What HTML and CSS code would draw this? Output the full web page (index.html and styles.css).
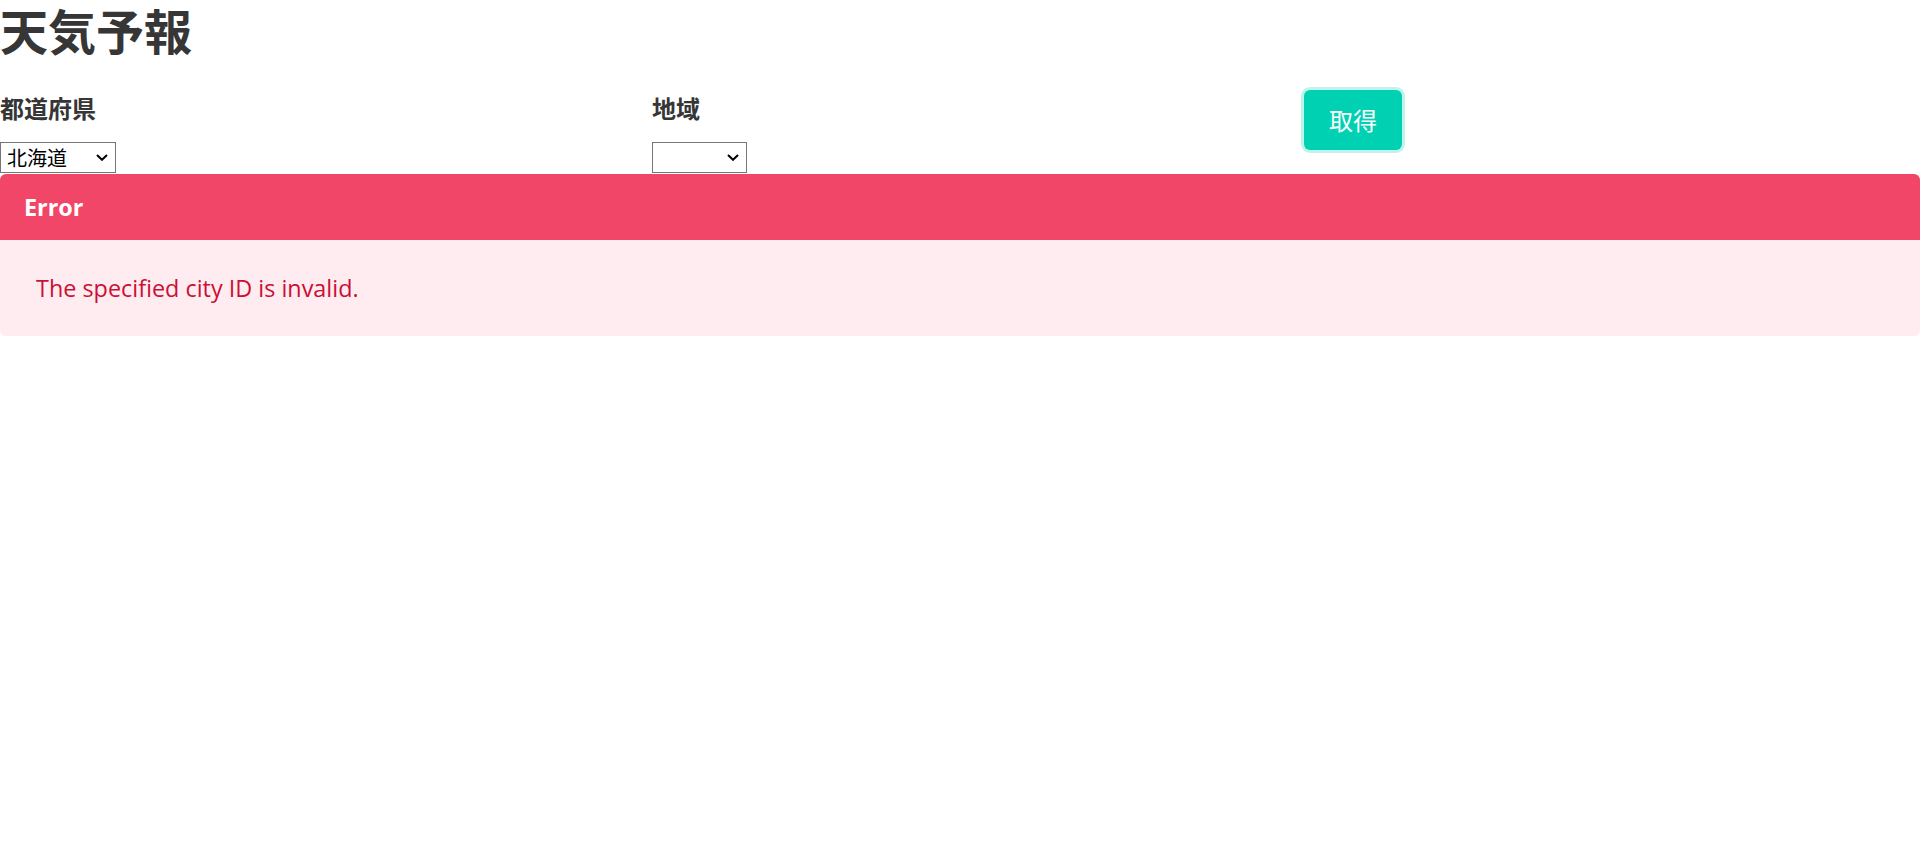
FILE: index.html
```html
<!DOCTYPE html>
<html lang="ja">
<head>
<meta charset="utf-8">
<title>天気予報</title>
<link rel="stylesheet" href="styles.css">
</head>
<body>
<h1 class="title">天気予報</h1>
<div class="columns">
  <div class="column">
    <label class="label">都道府県</label>
    <div class="control">
      <div class="select-wrap">
        <select class="select select-pref"><option>北海道</option></select>
        <svg class="chev" viewBox="0 0 12 7" width="12" height="7"><path d="M1 1 L6 5.8 L11 1" fill="none" stroke="#000" stroke-width="2"/></svg>
      </div>
    </div>
  </div>
  <div class="column">
    <label class="label">地域</label>
    <div class="control">
      <div class="select-wrap">
        <select class="select select-area"><option></option></select>
        <svg class="chev" viewBox="0 0 12 7" width="12" height="7"><path d="M1 1 L6 5.8 L11 1" fill="none" stroke="#000" stroke-width="2"/></svg>
      </div>
    </div>
  </div>
  <div class="column">
    <button class="button">取得</button>
  </div>
</div>
<article class="message">
  <div class="message-header">Error</div>
  <div class="message-body">The specified city ID is invalid.</div>
</article>
</body>
</html>
```
FILE: styles.css
```css
html, body {
  margin: 0;
  padding: 0;
  background: #fff;
}
body {
  font-family: "Open Sans", "Noto Sans CJK JP", sans-serif;
  color: #4a4a4a;
}
.title {
  margin: 0 0 32px;
  font-family: "Noto Sans CJK JP", sans-serif;
  font-size: 48px;
  line-height: 58px;
  font-weight: 700;
  color: #363636;
}
.columns {
  display: grid;
  grid-template-columns: repeat(3, 1fr);
  column-gap: 36px;
}
.column {
  display: flex;
  flex-direction: column;
  align-items: flex-start;
}
.label {
  display: block;
  font-family: "Noto Sans CJK JP", sans-serif;
  font-size: 24px;
  line-height: 36px;
  font-weight: 700;
  color: #363636;
  margin-bottom: 12px;
}
.control {
  height: 36px;
  padding-top: 4px;
  box-sizing: border-box;
}
.select-wrap {
  position: relative;
  display: inline-block;
}
.select {
  appearance: none;
  -webkit-appearance: none;
  display: block;
  box-sizing: border-box;
  height: 31px;
  margin: 0;
  padding: 0 6px;
  border: 1px solid #767676;
  border-radius: 0;
  background: #fff;
  color: #000;
  font-family: "Noto Sans CJK JP", sans-serif;
  font-size: 20px;
  line-height: 29px;
}
.select-pref { width: 116px; }
.select-area { width: 95px; }
.chev {
  position: absolute;
  right: 8px;
  top: 12px;
  pointer-events: none;
}
.button {
  box-sizing: border-box;
  width: 98px;
  height: 60px;
  margin-top: 0;
  padding: 0;
  border: 1px solid transparent;
  border-radius: 6px;
  background: #00d1b2;
  color: #fff;
  font-family: "Noto Sans CJK JP", sans-serif;
  font-size: 24px;
  line-height: 1;
  box-shadow: 0 0 0 3px rgba(0, 209, 178, 0.25);
}
.message {
  border-radius: 6px;
  background: #feecf0;
  font-size: 23.4px;
}
.message-header {
  background: #f14668;
  color: #fff;
  font-weight: 700;
  padding: 18px 24px;
  line-height: 30px;
  border-radius: 6px 6px 0 0;
}
.message-body {
  padding: 30px 36px;
  line-height: 36px;
  color: #cc0f35;
}
```
